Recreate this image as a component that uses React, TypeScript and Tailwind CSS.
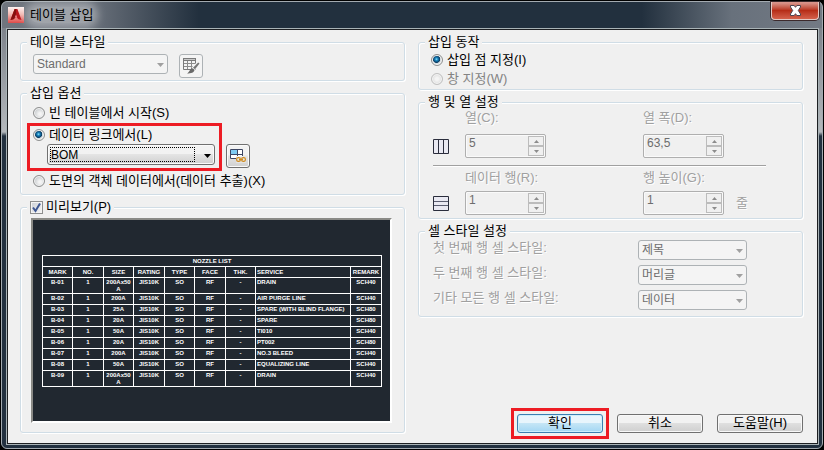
import { useState, type ReactNode } from "react";
import clsx from "clsx";

const COLUMNS = [
  { title: "MARK", width: "w-[30px]" },
  { title: "NO.", width: "w-[31px]" },
  { title: "SIZE", width: "w-[30px]" },
  { title: "RATING", width: "w-[31px]" },
  { title: "TYPE", width: "w-[30px]" },
  { title: "FACE", width: "w-[31px]" },
  { title: "THK.", width: "w-[30px]" },
  { title: "SERVICE", width: "" },
  { title: "REMARK", width: "w-[31px]" },
];

const NOZZLES = [
  ["B-01", "1", "200Ax50 A", "JIS10K", "SO", "RF", "-", "DRAIN", "SCH40"],
  ["B-02", "1", "200A", "JIS10K", "SO", "RF", "-", "AIR PURGE LINE", "SCH40"],
  ["B-03", "1", "25A", "JIS10K", "SO", "RF", "-", "SPARE (WITH BLIND FLANGE)", "SCH80"],
  ["B-04", "1", "20A", "JIS10K", "SO", "RF", "-", "SPARE", "SCH80"],
  ["B-05", "1", "50A", "JIS10K", "SO", "RF", "-", "TI010", "SCH40"],
  ["B-06", "1", "20A", "JIS10K", "SO", "RF", "-", "PT002", "SCH80"],
  ["B-07", "1", "200A", "JIS10K", "SO", "RF", "-", "NO.3 BLEED", "SCH40"],
  ["B-08", "1", "50A", "JIS10K", "SO", "RF", "-", "EQUALIZING LINE", "SCH40"],
  ["B-09", "1", "200Ax50 A", "JIS10K", "SO", "RF", "-", "DRAIN", "SCH40"],
];

function Group({ title, className, children }: { title: ReactNode; className?: string; children: ReactNode }) {
  return (
    <fieldset className="min-w-0 rounded-[3px] border border-[#d0dde6] shadow-[1px_1px_0_#fff,inset_1px_1px_0_#fff]">
      <legend className="ml-1.5 bg-[#f0f0f0] px-[3px] leading-4">{title}</legend>
      <div className={className}>{children}</div>
    </fieldset>
  );
}

function Radio({
  name,
  label,
  checked,
  disabled,
  onChange,
  className,
}: {
  name: string;
  label: string;
  checked: boolean;
  disabled?: boolean;
  onChange?: () => void;
  className?: string;
}) {
  return (
    <label className={clsx("flex items-center gap-1", disabled && "text-[#838383]", className)}>
      <input
        type="radio"
        name={name}
        checked={checked}
        disabled={disabled}
        onChange={() => onChange?.()}
        className="size-3 shrink-0 appearance-none rounded-full border border-[#8e8f8f] bg-[radial-gradient(circle_at_60%_60%,#f4f4f4_15%,#c3c7ca_75%)] shadow-[inset_0_0_0_1px_#f4f4f4] checked:bg-[radial-gradient(circle_at_45%_42%,#8fe0f8_0,#1583be_18%,#0b3a60_42%,#cdd6dc_50%,#e6e9eb_70%)] disabled:border-[#c0c0c0] disabled:bg-[radial-gradient(circle,#f4f4f4_20%,#dcdcdc_75%)]"
      />
      {label}
    </label>
  );
}

function Combo({
  id,
  label,
  options,
  disabled,
  className,
}: {
  id: string;
  label?: string;
  options: string[];
  disabled?: boolean;
  className?: string;
}) {
  return (
    <div className={clsx("relative", className)}>
      <select
        id={id}
        aria-label={label}
        disabled={disabled}
        className={clsx(
          "block h-full w-full appearance-none rounded-[3px] border pl-[3px] text-xs leading-4 opacity-100 outline-none",
          disabled
            ? "border-[#adb2b5] bg-[#f4f4f4] text-[#6d6d6d]"
            : "border-[#707070] bg-linear-to-b from-[#f2f2f2] from-45% via-[#e4e4e4] via-50% to-[#d0d0d0] text-black shadow-[inset_0_0_0_1px_#fafafa]",
        )}
      >
        {options.map((o) => (
          <option key={o}>{o}</option>
        ))}
      </select>
      {!disabled && (
        <span className="pointer-events-none absolute inset-y-[3px] right-5 left-[3px] border border-dotted border-black" />
      )}
      <svg
        viewBox="0 0 7 4"
        className={clsx(
          "pointer-events-none absolute top-1/2 right-1 h-1 w-[7px] -translate-y-px",
          disabled ? "fill-[#a0a0a0]" : "fill-black",
        )}
      >
        <path d="M0 0h7L3.5 4z" />
      </svg>
    </div>
  );
}

function Spinner({ id, label, value }: { id: string; label: string; value: string }) {
  return (
    <div className="flex h-6 w-[81px] rounded-[2px] border border-[#afafaf] bg-[#f0f0f0] shadow-[inset_0_0_0_1px_#fafafa]">
      <input
        id={id}
        disabled
        defaultValue={value}
        className="h-4 w-0 min-w-0 flex-1 pl-[3px] text-xs leading-4 text-[#6d6d6d]"
      />
      <div className="m-px flex w-4 flex-col">
        <button
          type="button"
          disabled
          aria-label={`${label} +`}
          className="flex flex-1 items-center justify-center border border-[#bcbcbc] bg-[#f0f0f0]"
        >
          <svg viewBox="0 0 5 3" className="h-[3px] w-[5px] fill-[#8c8c8c]">
            <path d="M0 3h5L2.5 0z" />
          </svg>
        </button>
        <button
          type="button"
          disabled
          aria-label={`${label} -`}
          className="flex flex-1 items-center justify-center border border-[#bcbcbc] bg-[#f0f0f0]"
        >
          <svg viewBox="0 0 5 3" className="h-[3px] w-[5px] fill-[#8c8c8c]">
            <path d="M0 0h5L2.5 3z" />
          </svg>
        </button>
      </div>
    </div>
  );
}

function PushButton({ children, primary }: { children: ReactNode; primary?: boolean }) {
  return (
    <button
      type="button"
      className={clsx(
        "flex h-[19px] w-[86px] items-center justify-center rounded-[3px] border pb-0.5 text-[13px] leading-4",
        primary
          ? "border-[#3c7fb1] bg-linear-to-b from-[#e8f5fc] from-45% via-[#c4e5f6] via-50% to-[#a3d7f3] shadow-[inset_0_0_0_1px_#cdeffc]"
          : "border-[#707070] bg-linear-to-b from-[#f2f2f2] from-45% via-[#dfdfdf] via-50% to-[#cfcfcf] shadow-[inset_0_0_0_1px_#f8f8f8]",
      )}
    >
      {children}
    </button>
  );
}

function LogoIcon() {
  return (
    <svg viewBox="0 0 16 16" className="size-4">
      <defs>
        <linearGradient id="logo-bg" x1="0" y1="0" x2="0" y2="1">
          <stop offset="0" stopColor="#fdf3f1" />
          <stop offset="0.45" stopColor="#f3b9b3" />
          <stop offset="1" stopColor="#dd4a48" />
        </linearGradient>
      </defs>
      <path fill="url(#logo-bg)" d="M0 0h16v16H0z" />
      <path fill="#b9151b" d="M6.600 2h2.800L13.500 13l-3-.8L8 10l-2.500 2.200-3 .8z" />
      <path fill="#86100f" d="M6.600 2H8v8l-2.500 2.200-3 .8z" />
      <path fill="#f0838a" d="M8 7.500l1.300 3H6.700z" />
    </svg>
  );
}

function TableStyleIcon() {
  return (
    <svg viewBox="0 0 17 16" className="h-4 w-[17px]">
      <path fill="#f4f4f4" stroke="#7a7a7a" d="M.5.5h12v11H.5z" />
      <path fill="#7a7a7a" d="M0 0h13v3H0z" />
      <path stroke="#c8c8c8" d="M1 1.500h11" />
      <path stroke="#8c8c8c" d="M1 5.500h11M1 8.500h11M4.500 3v8M8.500 3v8" />
      <path stroke="#f4f4f4" strokeWidth="4" d="M16 5l-6 6" />
      <path fill="#767676" d="M16.500 5.500l-4.500 5.700-2-1.500L15.200 4.500z" />
      <path fill="#6a6a6a" d="M9.300 10.200l2.200 1.600c-.2 3-3.500 3.700-7.500 3.700 2.500-1 2.500-4.800 5.300-5.300z" />
    </svg>
  );
}

function LinkTableIcon() {
  return (
    <svg viewBox="0 0 16 14" className="h-3.5 w-4">
      <path fill="#fff" d="M0 0h13v10H0z" />
      <path fill="#7fcbf2" d="M1 1h6v4H1z" />
      <path fill="none" stroke="#3c4663" d="M6 9.500H.5v-9h12V7M1 5.500h11M7.500 1v6" />
      <path fill="#e4e4e4" d="M6 7.500h10V14H6z" />
      <g fill="none" stroke="#cf8b1f" strokeWidth="1.200">
        <rect x="6.600" y="8.600" width="3.800" height="3.800" rx="1.700" />
        <rect x="11.600" y="8.600" width="3.800" height="3.800" rx="1.700" />
        <path d="M9 10.500h4" />
      </g>
    </svg>
  );
}

function ColumnsIcon() {
  return (
    <svg viewBox="0 0 16 15" className="h-[15px] w-4">
      <path fill="#e9e9f2" stroke="#2a2d3c" d="M.5.5h15v14H.5z" />
      <path stroke="#2a2d3c" d="M5.500 1v13M10.500 1v13" />
    </svg>
  );
}

function RowsIcon() {
  return (
    <svg viewBox="0 0 16 15" className="h-[15px] w-4">
      <path fill="#e9e9f2" stroke="#2a2d3c" d="M.5.5h15v14H.5z" />
      <path stroke="#5a5d70" d="M1 5.500h14M1 9.500h14" />
    </svg>
  );
}

function Preview() {
  return (
    <div className="h-[205px] border-2 border-t-[#8a8a86] border-r-white border-b-white border-l-[#8a8a86] bg-[#212830] pt-[35px] pr-2 pl-[9px]">
      <table className="w-full table-fixed border-collapse text-center text-[6px] leading-[7px] font-bold text-white">
        <colgroup>
          {COLUMNS.map((c) => (
            <col key={c.title} className={c.width} />
          ))}
        </colgroup>
        <thead>
          <tr className="h-[11px]">
            <th colSpan={9} className="border border-white p-0">
              NOZZLE LIST
            </th>
          </tr>
          <tr className="h-[11px]">
            {COLUMNS.map((c) => (
              <th
                key={c.title}
                className={clsx("border border-white p-0", c.title === "SERVICE" && "pl-px text-left")}
              >
                {c.title}
              </th>
            ))}
          </tr>
        </thead>
        <tbody className="align-top">
          {NOZZLES.map((row) => (
            <tr key={row[0]} className="h-[11px]">
              {row.map((cell, i) => (
                <td key={i} className={clsx("border border-white px-0 pt-px pb-0", i === 7 && "pl-px text-left")}>
                  {cell}
                </td>
              ))}
            </tr>
          ))}
        </tbody>
      </table>
    </div>
  );
}

const etched = "text-[#a0a0a0] [text-shadow:1px_1px_0_#fff]";

export default function App() {
  const [source, setSource] = useState("link");
  const [preview, setPreview] = useState(true);

  return (
    <div className="bg-black p-px font-['Liberation_Sans','Noto_Sans_CJK_KR',sans-serif] text-[13px] leading-4 text-black">
      <div className="rounded-[6px] border border-[#a3aab0] bg-[#22303f] bg-[linear-gradient(90deg,#70757e_0,#6a717b_11%,#22303e_24%,#22303e_78%,#68717c_89%,#737a84_100%),linear-gradient(180deg,#70757e_0,#b4b8bc_130px,#22303f_134px,#22303f_100%)] bg-[length:100%_26px,100%_100%] bg-no-repeat">
        <header className="flex h-[26px] items-center pr-[3px] pl-1.5">
          <LogoIcon />
          <h1 className="ml-1.5 rounded-full bg-white/35 shadow-[0_0_8px_5px_rgba(255,255,255,0.35)]">테이블 삽입</h1>
          <button
            type="button"
            aria-label="닫기"
            className="ml-auto flex h-[18px] w-12 items-center justify-center self-start rounded-b-[4px] border border-t-0 border-[#e3c9c4] bg-linear-to-b from-[#d9948a] from-5% via-[#b62d17] via-50% to-[#d4604a] shadow-[0_0_0_1px_#3c2a2c]"
          >
            <svg viewBox="0 0 13 11" className="h-[11px] w-[13px]">
              <path
                fill="#fff"
                stroke="#4d4450"
                d="M1.500.5h3.700l1.300 1.800L7.800.5h3.700v1.500L9.300 5.500l2.200 3.500v1.500H7.800L6.500 8.700 5.200 10.500H1.500V9l2.200-3.500L1.500 2z"
              />
            </svg>
          </button>
        </header>

        <main className="mr-[3px] mb-[3px] ml-1 border border-[#a9b3b6]">
          <div className="grid grid-cols-2 gap-x-[13px] border border-[#1d1f22] bg-[#f0f0f0] pt-1 pr-3.5 pb-2.5 pl-3">
            <div className="flex flex-col gap-1">
              <Group title="테이블 스타일" className="flex gap-[11px] px-3 pt-1 pb-0.5">
                <Combo id="style" label="테이블 스타일" options={["Standard"]} disabled className="h-5 w-[135px]" />
                <button
                  type="button"
                  disabled
                  aria-label="테이블 스타일 대화상자"
                  className="flex size-6 items-center justify-center rounded-[3px] border border-[#adb2b5] bg-[#f4f4f4]"
                >
                  <TableStyleIcon />
                </button>
              </Group>

              <Group title="삽입 옵션" className="pt-0.5 pb-[3px]">
                <Radio
                  name="source"
                  label="빈 테이블에서 시작(S)"
                  checked={source === "empty"}
                  onChange={() => setSource("empty")}
                  className="ml-3 h-5"
                />
                <div className="flex items-end gap-1">
                  <div className="ml-1.5 w-[195px] border-3 border-[#ed1c24]">
                    <Radio
                      name="source"
                      label="데이터 링크에서(L)"
                      checked={source === "link"}
                      onChange={() => setSource("link")}
                      className="ml-[3px] h-[18px]"
                    />
                    <Combo
                      id="link"
                      label="데이터 링크"
                      options={["BOM"]}
                      className="mr-1 mb-[3px] ml-[17px] h-[21px]"
                    />
                  </div>
                  <button
                    type="button"
                    aria-label="데이터 링크 관리자"
                    className="mb-[3px] flex size-6 items-center justify-center rounded-[3px] border border-[#707070] bg-linear-to-b from-[#f2f2f2] from-45% via-[#e4e4e4] via-50% to-[#d0d0d0] shadow-[inset_0_0_0_1px_#fafafa]"
                  >
                    <LinkTableIcon />
                  </button>
                </div>
                <Radio
                  name="source"
                  label="도면의 객체 데이터에서(데이터 추출)(X)"
                  checked={source === "extract"}
                  onChange={() => setSource("extract")}
                  className="ml-3 h-5"
                />
              </Group>

              <Group
                className="pt-[3px] pr-3 pb-[9px] pl-2.5"
                title={
                  <label className="relative flex items-center gap-[3px]">
                    <input
                      type="checkbox"
                      checked={preview}
                      onChange={(e) => setPreview(e.target.checked)}
                      className="peer size-[13px] appearance-none border border-[#8e8f8f] bg-linear-to-br from-[#cbcfd5] to-[#f6f6f6] shadow-[inset_0_0_0_1px_#f4f4f4]"
                    />
                    <svg
                      viewBox="0 0 13 13"
                      className="pointer-events-none absolute left-0 hidden size-[13px] peer-checked:block"
                    >
                      <path fill="none" stroke="#3d5692" strokeWidth="2" d="M3 6.500l2.500 3.500L10 2.500" />
                    </svg>
                    미리보기(P)
                  </label>
                }
              >
                <Preview />
              </Group>
            </div>

            <div className="flex flex-col gap-1">
              <Group title="삽입 동작" className="px-3 pt-px">
                <Radio name="behavior" label="삽입 점 지정(I)" checked className="h-[18px]" />
                <Radio name="behavior" label="창 지정(W)" checked={false} disabled className="h-5" />
              </Group>

              <Group title="행 및 열 설정" className="pr-9 pb-[3px] pl-3.5">
                <div className="grid grid-cols-[32px_178px_1fr]">
                  <label htmlFor="cols" className={clsx("col-start-2", etched)}>
                    열(C):
                  </label>
                  <label htmlFor="colw" className={etched}>
                    열 폭(D):
                  </label>
                </div>
                <div className="mt-2 grid grid-cols-[32px_178px_1fr] items-center">
                  <ColumnsIcon />
                  <Spinner id="cols" label="열" value="5" />
                  <Spinner id="colw" label="열 폭" value="63,5" />
                </div>
                <hr className="mt-[7px] mb-1 border-t border-[#a0a0a0] shadow-[0_1px_0_#fff]" />
                <div className="grid grid-cols-[32px_178px_1fr]">
                  <label htmlFor="rows" className={clsx("col-start-2", etched)}>
                    데이터 행(R):
                  </label>
                  <label htmlFor="rowh" className={etched}>
                    행 높이(G):
                  </label>
                </div>
                <div className="mt-[5px] grid grid-cols-[32px_178px_1fr] items-center">
                  <RowsIcon />
                  <Spinner id="rows" label="데이터 행" value="1" />
                  <div className="flex items-center gap-3">
                    <Spinner id="rowh" label="행 높이" value="1" />
                    <span className={etched}>줄</span>
                  </div>
                </div>
              </Group>

              <Group title="셀 스타일 설정" className="flex flex-col gap-[5px] pt-px pr-[55px] pb-1.5 pl-3.5">
                {[
                  ["first", "첫 번째 행 셀 스타일:", "제목"],
                  ["second", "두 번째 행 셀 스타일:", "머리글"],
                  ["other", "기타 모든 행 셀 스타일:", "데이터"],
                ].map(([id, label, value]) => (
                  <div key={id} className="flex justify-between">
                    <label htmlFor={id} className={etched}>
                      {label}
                    </label>
                    <Combo id={id} options={[value]} disabled className="h-5 w-[109px]" />
                  </div>
                ))}
              </Group>

              <div className="mt-auto flex items-center justify-end gap-3.5">
                <div className="-my-1.5 -mr-1.5 border-3 border-[#ed1c24] p-[3px]">
                  <PushButton primary>확인</PushButton>
                </div>
                <PushButton>취소</PushButton>
                <PushButton>도움말(H)</PushButton>
              </div>
            </div>
          </div>
        </main>
      </div>
    </div>
  );
}
